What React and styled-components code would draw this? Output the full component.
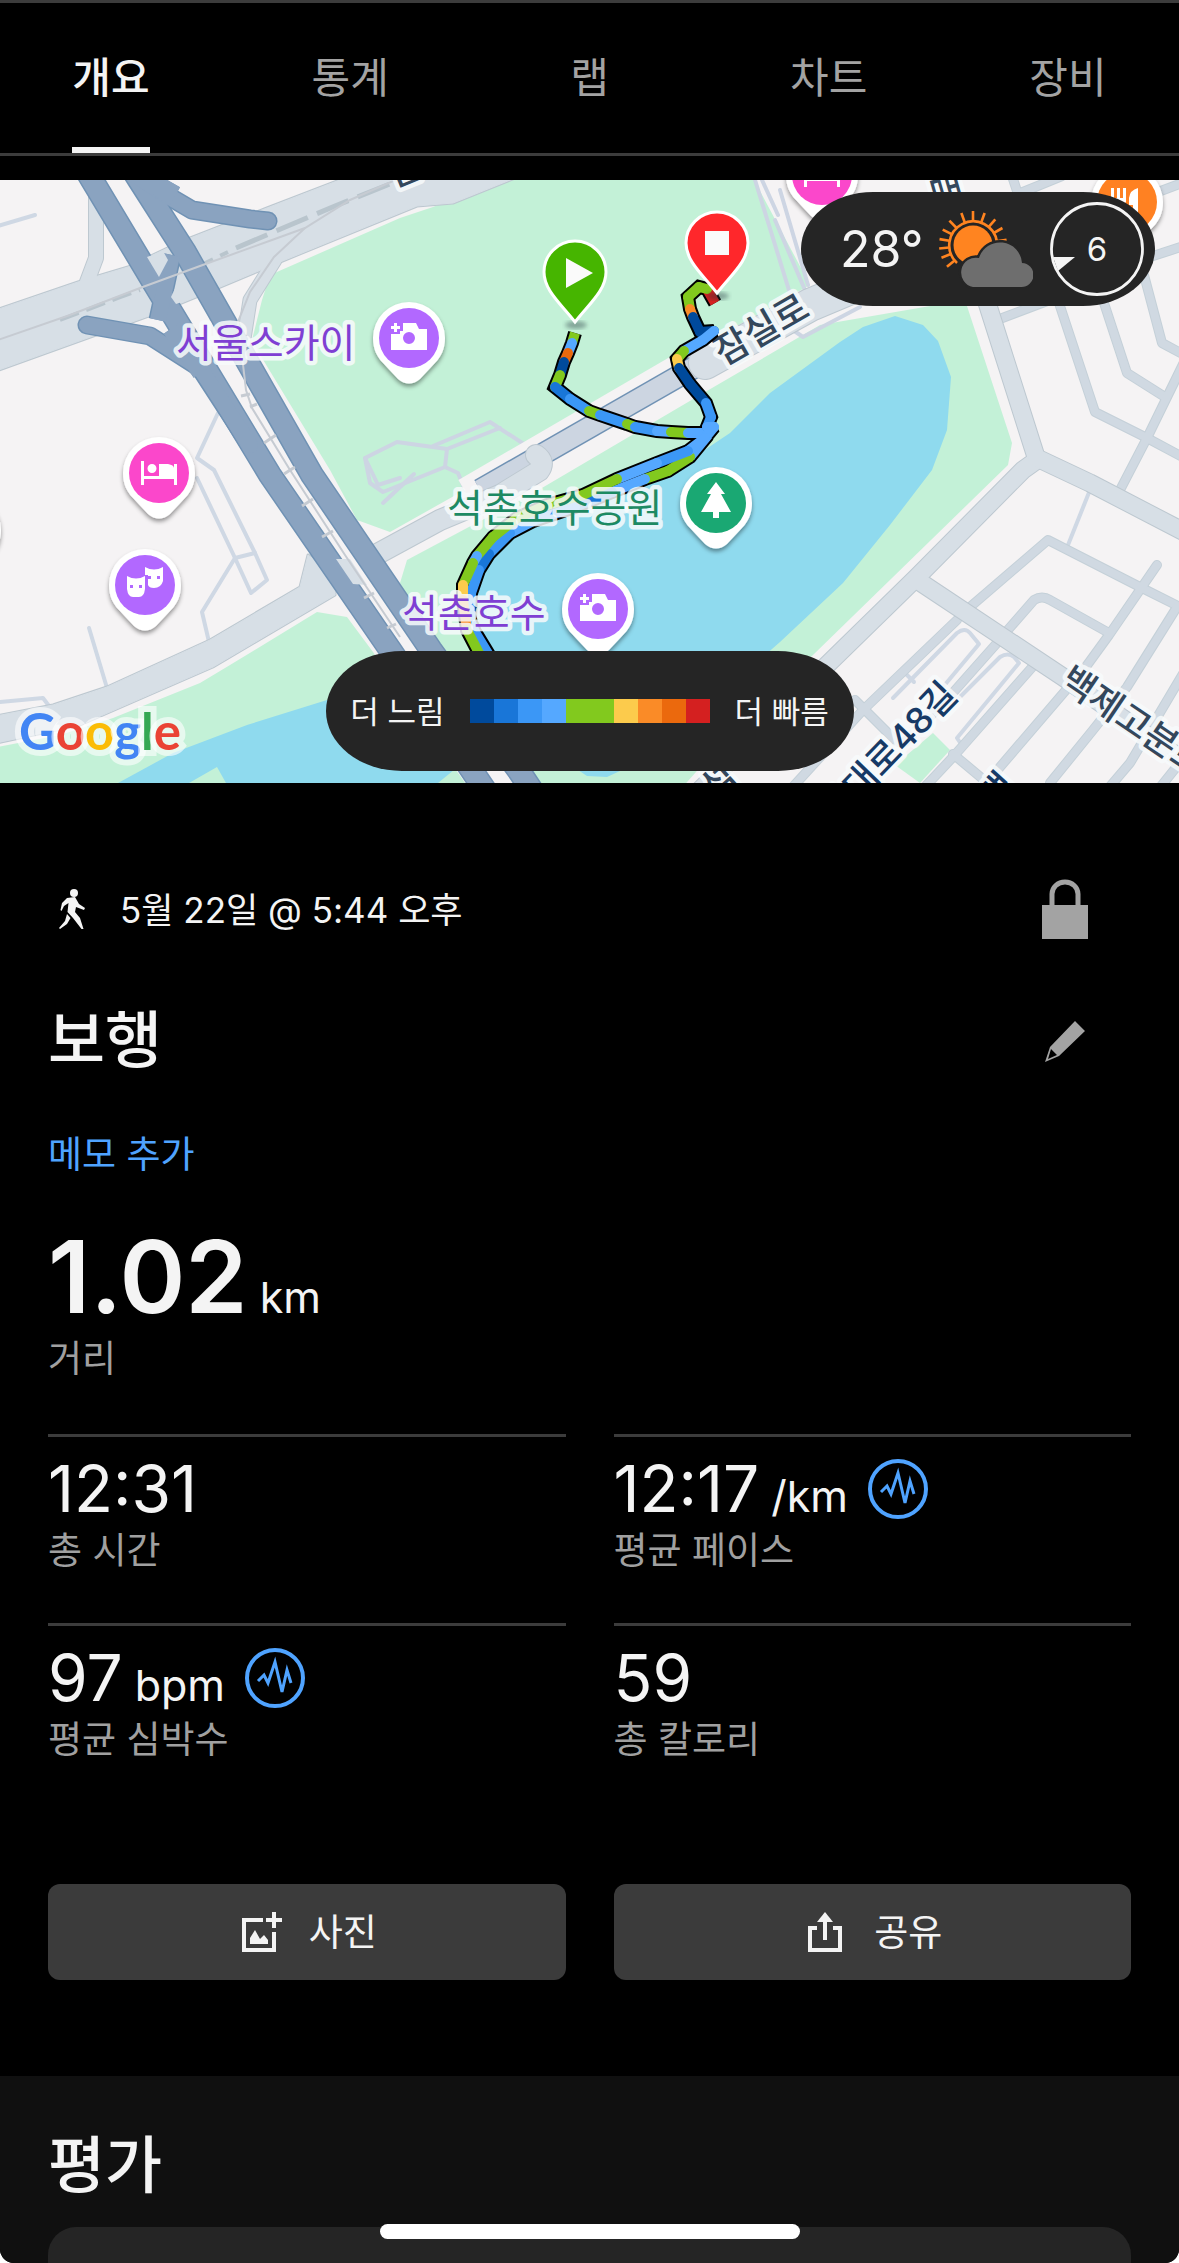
import React, { useState } from 'react';
import styled, { createGlobalStyle } from 'styled-components';

const GlobalStyle = createGlobalStyle`
  *, *::before, *::after { box-sizing: border-box; }
  body {
    margin: 0;
    background: #fff;
    font-family: Inter, 'Noto Sans CJK KR', sans-serif;
  }
  button { font: inherit; color: inherit; border: 0; background: none; padding: 0; cursor: pointer; }
  h1, h2, p, dl, dt, dd { margin: 0; font-weight: inherit; font-size: inherit; }
`;

const Page = styled.main`
  display: flex;
  flex-direction: column;
  min-height: 100vh;
  background: #000;
  color: #f4f4f4;
  border-radius: 0 0 14px 14px;
  overflow: hidden;
`;

/* ---------- Tabs ---------- */

const TabBar = styled.nav`
  display: flex;
  justify-content: space-between;
  height: 156px;
  padding: 0 72px;
  border-top: 3px solid #3c3c3c;
  border-bottom: 3px solid #3c3c3c;
`;

const Tab = styled.button`
  min-width: 78px;
  padding-bottom: 8px;
  font-size: 42px;
  font-weight: ${(p) => (p.$active ? 500 : 400)};
  color: ${(p) => (p.$active ? '#f4f4f4' : '#a3a3a3')};
  border-top: 6px solid transparent;
  border-bottom: 6px solid ${(p) => (p.$active ? '#f4f4f4' : 'transparent')};
`;

/* ---------- Map ---------- */

const MapPanel = styled.section`
  position: relative;
  height: 603px;
  margin-top: 24px;
  overflow: hidden;
  background: #f5f3f4;
`;

const MapCanvas = styled.svg`
  display: block;
  width: 100%;
  height: 100%;
`;

const MapText = styled.text`
  font-family: Inter, 'Noto Sans CJK KR', sans-serif;
  font-size: ${(p) => p.$size || 39}px;
  font-weight: ${(p) => p.$weight || 400};
  fill: ${(p) => p.$color};
  stroke: rgba(248, 251, 252, 0.85);
  stroke-width: 9px;
  stroke-linejoin: round;
  paint-order: stroke;
  dominant-baseline: central;
`;

const Attribution = styled.div`
  position: absolute;
  left: 19px;
  bottom: 20px;
  font-family: Lato, sans-serif;
  font-size: 51px;
  font-weight: 700;
  line-height: 64px;
  -webkit-text-stroke: 12px rgba(255, 255, 255, 0.6);
  paint-order: stroke;
`;

const LogoLetter = styled.span`
  color: ${(p) => p.$color};
`;

const WeatherPill = styled.div`
  position: absolute;
  top: 12px;
  right: 24px;
  display: flex;
  align-items: center;
  width: 354px;
  height: 114px;
  padding: 0 10px 0 39px;
  border-radius: 72px / 57px;
  background: #252525;
`;

const Temperature = styled.span`
  flex: 1;
  font-size: 50px;
  font-weight: 400;
`;

const Wind = styled.div`
  display: grid;
  place-items: center;
  margin-left: 16px;
  font-size: 33px;
  line-height: 96px;

  > * { grid-area: 1 / 1; }
`;

const Legend = styled.div`
  position: absolute;
  left: 50%;
  bottom: 12px;
  transform: translateX(-50%);
  display: flex;
  align-items: center;
  justify-content: center;
  gap: 25px;
  width: 528px;
  height: 120px;
  border-radius: 76px / 60px;
  background: #252525;
  font-size: 31px;
  white-space: nowrap;
`;

const Caption = styled.span`
  padding-bottom: 4px;
`;

const Scale = styled.div`
  display: flex;
`;

const Swatch = styled.span`
  width: 24px;
  height: 24px;
  background: ${(p) => p.$color};
`;

/* ---------- Summary ---------- */

const Summary = styled.section`
  padding: 84px 48px 96px;
`;

const Row = styled.div`
  display: flex;
  align-items: center;
  justify-content: space-between;
  height: ${(p) => p.$height}px;
  margin-bottom: 42px;
`;

const When = styled.div`
  display: flex;
  align-items: center;
  gap: 24px;
  font-size: 35px;
`;

const IconButton = styled.button`
  display: grid;
  place-items: center;
  width: 132px;
  height: 84px;
`;

const Title = styled.h1`
  font-size: 62px;
  font-weight: 500;
  line-height: 84px;
`;

const NoteLink = styled.a`
  display: block;
  width: fit-content;
  font-size: 37px;
  line-height: 48px;
  color: #4fa3ff;
  text-decoration: none;
`;

const Metric = styled.div`
  display: flex;
  flex-direction: column-reverse;
`;

const Distance = styled(Metric)`
  margin: 48px 0 51px;
`;

const Label = styled.dt`
  padding-top: 2px;
  font-size: 37px;
  line-height: 48px;
  color: #a0a0a0;
`;

const BigValue = styled.dd`
  margin-bottom: 6px;
  font-size: 100px;
  font-weight: 600;
  line-height: 100px;
`;

const Unit = styled.span`
  margin-left: 12px;
  font-size: 43px;
  font-weight: 400;
  line-height: 1;
`;

const Stats = styled.dl`
  display: grid;
  grid-template-columns: 1fr 1fr;
  gap: 48px;
`;

const Stat = styled(Metric)`
  padding-top: 16px;
  border-top: 3px solid #3c3c3c;
`;

const Value = styled.dd`
  display: flex;
  align-items: center;
  gap: 20px;
  height: 72px;
  font-size: 64px;
  line-height: 72px;
`;

const Actions = styled.div`
  display: grid;
  grid-template-columns: 1fr 1fr;
  gap: 48px;
  margin-top: 120px;
`;

const ActionButton = styled.button`
  display: flex;
  align-items: center;
  justify-content: center;
  gap: 24px;
  height: 96px;
  border-radius: 12px;
  background: #3b3b3b;
  font-size: 37px;
`;

/* ---------- Rating ---------- */

const Rating = styled.section`
  flex: 1;
  display: flex;
  flex-direction: column;
  padding: 48px 48px 0;
  background: #101010;
`;

const RatingTitle = styled(Title)`
  margin-bottom: 19px;
`;

const RatingCard = styled.div`
  flex: 1;
  min-height: 36px;
  border-radius: 28px 28px 0 0;
  background: #252525;
`;

const HomeIndicator = styled.div`
  position: fixed;
  left: 50%;
  bottom: 24px;
  transform: translateX(-50%);
  width: 420px;
  height: 15px;
  border-radius: 8px;
  background: #fff;
`;

/* ---------- Map data ---------- */

const C = {
  navy: '#004a9c', blue: '#1976d8', mid: '#3b97f6', sky: '#55a8ff',
  green: '#82c91e', yellow: '#fccb4c', amber: '#fa8b27', orange: '#eb690d', red: '#d42020',
};

const LEGEND = [C.navy, C.blue, C.mid, C.sky, C.green, C.green, C.yellow, C.amber, C.orange, C.red];

const MINOR_ROADS = [
  'M1058 300L1095 412L1147 438L1190 461',
  'M1103 300L1127 373L1165 397',
  'M1144 275L1162 343L1190 358',
  'M1190 350L1147 438L1120 490',
  'M997 320L1050 300',
  'M1012 176L1018 194L1062 176',
  'M1150 257L1190 244',
  'M1158 192L1190 180',
  'M970 607L1048 540L1140 587L1190 612',
  'M1006 632L1034 600Q1042 595 1050 600L1109 633',
  'M1157 565L1109 635L1085 668',
  'M1066 690L1000 767L984 790',
  'M1177 607L1127 687L1093 730L1050 783',
  'M1190 662L1130 763L1107 790',
  'M1190 750L1158 790',
  'M957 620L863 710L790 790',
  'M997 643L950 696L905 742',
  'M1035 664L953 757L922 790',
  'M953 754L990 785',
  'M855 700L897 742',
];

const SERVICE_ROADS = [
  'M-2 226L35 215',
  'M218 413L197 458L214 470L255 553L267 580L251 593L235 558L197 478',
  'M235 558L202 612L209 642',
  'M235 558L255 553',
  'M89 628L107 688',
  'M0 702L43 698L52 710',
  'M1090 490L1068 545',
  'M893 698L957 633Q965 627 970 633L979 644L943 687',
  'M960 697L1000 657Q1008 652 1014 657L1019 663L957 738L961 744',
  'M907 675L914 682',
];

const PARK_PATHS = [
  'M433 446L490 422L533 450',
  'M500 428L447 449L397 442L365 458L370 483L383 492L445 467L458 473L465 490',
  'M447 449L445 467',
  'M383 503L414 474',
  'M365 458L378 485L400 478',
  'M755 180L772 235L792 300',
  'M762 180L778 215',
  'M775 220L805 290',
  'M860 307L803 337L790 328',
  'M780 190L808 285',
];

/* Each leg of the walk: points with the speed colour of the stretch that follows. */
const ROUTE = [
  {
    points: [[575, 333], [572, 343], [568, 353], [564, 362], [560, 375], [555, 387], [570, 399], [589, 411], [600, 415], [627, 424], [635, 427], [657, 431], [671, 432], [688, 433], [702, 433]],
    colors: [C.green, C.sky, C.orange, C.navy, C.green, C.blue, C.mid, C.green, C.mid, C.green, C.mid, C.sky, C.green, C.sky],
  },
  {
    points: [[715, 303], [707, 289], [699, 287], [688, 297], [690, 309], [693, 317], [700, 332], [714, 331], [703, 340], [684, 351], [677, 359], [679, 368], [690, 384], [706, 403], [711, 417], [707, 427], [714, 427], [705, 438], [688, 451], [657, 463], [617, 479], [583, 495], [547, 505], [517, 518], [493, 537], [477, 556], [473, 563], [463, 585], [463, 600], [467, 630], [480, 655]],
    colors: [C.red, C.green, C.green, C.green, C.amber, C.navy, C.navy, C.sky, C.sky, C.green, C.yellow, C.navy, C.navy, C.mid, C.mid, C.sky, C.sky, C.sky, C.mid, C.sky, C.green, C.green, C.green, C.green, C.green, C.sky, C.green, C.yellow, C.amber, C.green],
  },
];

const RETURN_LEG = {
  points: [[708, 435], [690, 457], [668, 471], [645, 479], [612, 492], [575, 507], [533, 521], [510, 533], [489, 554], [479, 570], [471, 593], [470, 620], [475, 632], [489, 655]],
  colors: [C.sky, C.green, C.green, C.sky, C.blue, C.mid, C.sky, C.mid, C.blue, C.mid, C.mid, C.mid, C.mid],
};

const toPath = (pts) => 'M' + pts.map((p) => p.join(' ')).join('L');

function Leg({ points, colors }) {
  return points.slice(1).map((p, i) => (
    <path key={i} d={toPath([points[i], p])} stroke={colors[i]} strokeWidth="10" strokeLinecap={i ? 'round' : 'butt'} />
  ));
}

/* ---------- Map drawings ---------- */

function PlacePin({ x, y, color, children }) {
  return (
    <g transform={`translate(${x} ${y})`}>
      <path
        d="M-36 0A36 36 0 1 1 36 0C36 11 32 19 26 25L11 41Q0 50-11 41L-26 25C-32 19-36 11-36 0Z"
        fill="#fff"
        filter="url(#pinShadow)"
      />
      <circle r="30" fill={color} />
      {children}
    </g>
  );
}

const CameraGlyph = () => (
  <path
    fill="#fff"
    fillRule="evenodd"
    d="M-18-4H-9V-7H-6V-15H7L10-9H18V12H-18ZM0-6A6 6 0 1 0 0 6A6 6 0 1 0 0-6ZM-15-15H-12V-12H-9V-9H-12V-6H-15V-9H-18V-12H-15Z"
  />
);

const BedGlyph = () => (
  <path fill="#fff" d="M-18-12H-15V3H0V-9H9Q15-8 15-5V-9H18V12H15V6H-15V12H-18ZM-7-9A4 4 0 1 1-7 0A4 4 0 1 1-7-9Z" />
);

const MasksGlyph = () => (
  <g fill="#fff">
    <path fillRule="evenodd" d="M0-18Q9-13 18-18V-4Q16 3 9 3Q4 3 3 0V-10H0ZM3-9V-6H6V-9ZM12-9V-6H15V-9Z" />
    <path fillRule="evenodd" d="M-18-9Q-9-4 0-9V4Q-1 12-6 12H-12Q-17 12-18 4ZM-15 0V3H-12V0ZM-6 0V3H-3V0Z" />
  </g>
);

const TreeGlyph = () => <path fill="#fff" d="M0-21L9-9H5L15 9H3V15H-3V9H-15L-5-9H-9Z" />;

const ForkGlyph = () => (
  <path fill="#fff" d="M-16-14H-13V-4H-10V-14H-7V-4H-4V-14H-1V0L-6 5V15H-11V5L-16 0ZM11-14V15H6V3H2V-4Q3-12 11-14Z" />
);

function RoutePin({ x, y, color, children }) {
  return (
    <g transform={`translate(${x} ${y})`}>
      <ellipse cx="1" cy="53" rx="11" ry="4" fill="#20303a" opacity="0.4" filter="url(#soft)" />
      <path
        d="M-31 0A31 31 0 0 1 31 0C31 18 15 31 0 50C-15 31-31 18-31 0Z"
        fill={color}
        stroke="#fff"
        strokeWidth="3"
      />
      {children}
    </g>
  );
}

function MapDrawing() {
  return (
    <MapCanvas viewBox="0 180 1179 603" preserveAspectRatio="xMidYMid slice" fill="none" aria-label="활동 지도">
      <defs>
        <filter id="pinShadow" x="-30%" y="-30%" width="160%" height="160%">
          <feDropShadow dx="0" dy="3" stdDeviation="2" floodColor="#000" floodOpacity="0.4" />
        </filter>
        <filter id="soft"><feGaussianBlur stdDeviation="2" /></filter>
      </defs>

      {/* parks */}
      <g fill="#c3f1d7">
        <path d="M270 275L400 218L433 207L510 176H752L810 285L680 358L545 440L470 487L390 532L357 520L330 470L262 358L252 340L262 300Z" />
        <path d="M407 560L467 528L530 495L700 395L820 325L965 300L1012 443L1008 465L813 655L720 745L680 790H542L420 620L400 583Z" />
        <path d="M317 612L347 617L373 652L470 790H-2V747L60 735L113 718L200 683L230 665Z" />
        <path d="M933 733L950 750L920 783L895 765Z" />
      </g>

      {/* water */}
      <g fill="#8fdaee">
        <path d="M895 316L923 325L938 341L951 377L947 430L932 470L890 525L843 583L780 642L700 712L620 771L607 777L587 776L575 768L520 700L480 630L475 590L490 553L530 528L593 503L673 470L700 453L730 433L770 393L840 342L863 327Z" />
        <path d="M327 700L247 725L173 753L118 783H189L217 767L226 783H438L460 765L400 700Z" />
      </g>

      {/* small roads */}
      <g stroke="#cfd8e4" strokeWidth="4" strokeLinejoin="round" strokeLinecap="round">
        {SERVICE_ROADS.map((d) => <path key={d} d={d} />)}
      </g>
      <g stroke="#cdd5e3" strokeWidth="4" strokeLinejoin="round" strokeLinecap="round">
        {PARK_PATHS.map((d) => <path key={d} d={d} />)}
      </g>
      <g stroke="#c4d0d8" strokeWidth="10" strokeLinejoin="round" strokeLinecap="round">
        {MINOR_ROADS.map((d) => <path key={d} d={d} />)}
      </g>
      <g stroke="#d0d9e2" strokeWidth="8" strokeLinejoin="round" strokeLinecap="round">
        {MINOR_ROADS.map((d) => <path key={d} d={d} />)}
      </g>

      {/* underpass beside the park */}
      <path d="M470 500L690 372" stroke="#f5f3f4" strokeWidth="46" />
      <path d="M480 490L700 364" stroke="#7092b4" strokeWidth="23" />
      <path d="M480 490L700 364" stroke="#ccd5e1" strokeWidth="20" />

      {/* main roads */}
      <g strokeLinejoin="round" strokeLinecap="round">
        {[['#bdc8d0', 2], ['#d7dfe6', 0]].map(([color, edge]) => (
          <g key={color} stroke={color}>
            <path d="M983 290L1037 460L1023 470L917 577L830 662L700 790" strokeWidth={17 + edge} />
            <path d="M1037 458L1090 483L1190 535" strokeWidth={17 + edge} />
            <path d="M917 580L1063 677L1190 765" strokeWidth={17 + edge} />
            <path d="M96 190V258L84 290" strokeWidth={14 + edge} />
            <path d="M275 260L250 300L243 345" strokeWidth={13 + edge} />
            <path d="M536 455Q546 462 539 471L500 495L440 520L370 558" strokeWidth={20 + edge} />
            <path d="M705 363L810 305L860 284" strokeWidth={32 + edge} />
            <path
              d="M-4 310L78 282L128 267L180 242L267 208L350 176H520L453 203L417 206L280 262L213 290L157 313L-4 371Z"
              fill="#d7dfe6"
              strokeWidth={1 + edge}
            />
            <path
              d="M-4 716L53 705L107 687L210 640L300 587L308 555L335 575V595L213 667L80 725L-4 743Z"
              fill="#d7dfe6"
              strokeWidth={1 + edge}
            />
          </g>
        ))}
      </g>
      <path d="M236 248L335 206L400 180" stroke="#b9c5cd" strokeWidth="5" strokeDasharray="34 10" />
      <path d="M60 320L118 298L140 290M195 268L228 252" stroke="#b9c5cd" strokeWidth="4" strokeDasharray="20 8" />

      {/* expressway */}
      <g strokeLinejoin="round">
        {[['#7092b4', 3], ['#8aa3c0', 0]].map(([color, edge]) => (
          <g key={color} stroke={color}>
            <path d="M74 150L92 180L152 280L270 475L391 651L485 790" strokeWidth={21 + edge} />
            <path d="M120 150L139 180L185 252L312 475L431 650L519 771L535 795" strokeWidth={21 + edge} />
            <path d="M172 255L158 320" strokeWidth={16 + edge} />
            <path d="M140 178L158 190L192 210L250 219L268 221" strokeWidth={16 + edge} strokeLinecap="round" />
            <path d="M130 170L175 196" strokeWidth={20} />
            <path d="M87 325L150 336L200 368L250 445" strokeWidth={16 + edge} strokeLinecap="round" />
            <path d="M172 328L202 372" strokeWidth={20} />
          </g>
        ))}
      </g>
      <path d="M147 257L163 251L168 260L159 277Z" fill="#d7dfe6" />
      <path d="M180 278L191 299L176 304L171 297Z" fill="#d7dfe6" />
      <path d="M336 559H350L367 585L353 584Z" fill="#d7dfe6" />
      <g stroke="#c6cbd2" strokeWidth="2">
        <path d="M-2 340L70 315L140 288L200 266L272 240L305 228L350 200L400 178" />
        <path d="M305 228L274 257L250 292L238 322L246 390L252 408L290 470L345 555L400 637" />
        <path d="M241 396L250 394M250 407L257 404M264 443L276 435M284 474L295 467M302 506L313 499M322 537L333 531M364 598L374 593M387 628L396 624" strokeWidth="3" />
      </g>

      {/* labels under the route */}
      <MapText x="388" y="176" $size={36} $weight={500} $color="#33475c" transform="rotate(-22 388 176)">림</MapText>
      <MapText x="947" y="188" $size={36} $weight={500} $color="#33475c" textAnchor="middle" transform="rotate(-106 947 188)">로</MapText>
      <MapText x="761" y="329" $size={37} $weight={500} $color="#33475c" textAnchor="middle" transform="rotate(-30 761 329)">잠실로</MapText>

      {/* walked route */}
      <g strokeLinejoin="miter" strokeMiterlimit="2">
        {[...ROUTE, RETURN_LEG].map((leg, i) => (
          <path key={i} d={toPath(leg.points)} stroke="#000" strokeWidth="14" />
        ))}
        <Leg {...ROUTE[0]} />
        <Leg {...RETURN_LEG} />
        <Leg {...ROUTE[1]} />
      </g>

      {/* labels */}
      <MapText x="176" y="342" $color="#7f3fd3">서울스카이</MapText>
      <MapText x="447" y="507" $color="#1d8a63">석촌호수공원</MapText>
      <MapText x="402" y="612" $color="#7f3fd3">석촌호수</MapText>
      <MapText x="950" y="688" $size={36} $weight={500} $color="#163a66" textAnchor="end" transform="rotate(-46 950 688)">송파대로48길</MapText>
      <MapText x="1065" y="675" $size={36} $weight={500} $color="#33475c" transform="rotate(34 1065 675)">백제고분로</MapText>
      <MapText x="718" y="781" $size={36} $weight={500} $color="#33475c" textAnchor="middle" transform="rotate(-42 718 781)">석</MapText>
      <MapText x="997" y="790" $size={36} $weight={500} $color="#163a66" textAnchor="middle" transform="rotate(-48 997 790)">백</MapText>

      {/* places */}
      <PlacePin x={-35} y={530} color="#b268ff" />
      <PlacePin x={159} y={473} color="#fb47cb"><BedGlyph /></PlacePin>
      <PlacePin x={145} y={585} color="#b268ff"><MasksGlyph /></PlacePin>
      <PlacePin x={409} y={338} color="#b268ff"><CameraGlyph /></PlacePin>
      <PlacePin x={598} y={609} color="#b268ff"><CameraGlyph /></PlacePin>
      <PlacePin x={716} y={503} color="#1aa873"><TreeGlyph /></PlacePin>
      <PlacePin x={822} y={175} color="#fb47cb"><BedGlyph /></PlacePin>
      <PlacePin x={1127} y={202} color="#ff8122"><ForkGlyph /></PlacePin>

      <RoutePin x={575} y={272} color="#46b500"><path d="M-9-14L18 1L-9 16Z" fill="#fafafa" /></RoutePin>
      <RoutePin x={717} y={243} color="#ff272b"><path d="M-12-12H12V12H-12Z" fill="#fafafa" /></RoutePin>
    </MapCanvas>
  );
}

/* ---------- Icons ---------- */

const SUN_RAYS = [140, 158, 174, 190, 207, 226, 250, 270, 290, 311, 330, 351];

function WeatherIcon() {
  return (
    <svg width="94" height="80" viewBox="0 0 94 80" role="img" aria-label="구름 조금">
      <g stroke="#ff8420" strokeWidth="2.6" fill="none">
        {SUN_RAYS.map((a) => {
          const r = (a * Math.PI) / 180;
          return (
            <line key={a} x1={34 + 24 * Math.cos(r)} y1={36 + 24 * Math.sin(r)} x2={34 + 34 * Math.cos(r)} y2={36 + 34 * Math.sin(r)} />
          );
        })}
        <path d="M18 54A24 24 0 1 1 58 33" />
      </g>
      <circle cx="34" cy="36" r="19.5" fill="#ff8420" />
      <path
        d="M34 78A14 14 0 1 1 40 49A22 22 0 0 1 83 54A12 12 0 0 1 82 78Z"
        fill="#6e6e6e"
        stroke="#252525"
        strokeWidth="5"
        paintOrder="stroke"
      />
    </svg>
  );
}

function WindDial() {
  return (
    <svg width="96" height="96" viewBox="0 0 96 96" fill="none" aria-hidden="true">
      <circle cx="48" cy="48" r="45.5" stroke="#f4f4f4" strokeWidth="2.8" />
      <path d="M4 56H26L9 70Z" fill="#f4f4f4" />
    </svg>
  );
}

function WalkIcon() {
  return (
    <svg width="48" height="48" viewBox="0 0 48 48" fill="#f4f4f4" aria-hidden="true">
      <circle cx="26" cy="8" r="4" />
      <path d="M19 13L27 12L31 19L37 23L36 25L28 22L27 27L32 33L35.500 44L33.500 44L25 33L19.500 27L20.500 18L16 21L13.500 26L12.500 25L14 18Z" />
      <path d="M19 29L22.500 33L19 39L12 44L11 43L17 36Z" />
    </svg>
  );
}

function LockIcon() {
  return (
    <svg width="48" height="60" viewBox="0 0 48 60" fill="none" aria-hidden="true">
      <path d="M11 28V15A13 12 0 0 1 37 15V28" stroke="#a3a3a3" strokeWidth="5" />
      <path d="M1 26H47V60H1Z" fill="#a3a3a3" />
    </svg>
  );
}

function PencilIcon() {
  return (
    <svg width="48" height="48" viewBox="0 0 48 48" aria-hidden="true">
      <path fill="#a3a3a3" fillRule="evenodd" d="M34 4L44 14L18 39L4 45L9 30ZM10 32L7 42L16 38Z" />
    </svg>
  );
}

function PulseIcon() {
  return (
    <svg width="60" height="60" viewBox="0 0 60 60" fill="none" stroke="#4fa3ff" aria-hidden="true">
      <circle cx="30" cy="30" r="28" strokeWidth="4" />
      <path d="M13 33L19 27L23 35L30 14L37 44L42 22L46 35" strokeWidth="3" />
    </svg>
  );
}

function PhotoIcon() {
  return (
    <svg width="48" height="48" viewBox="0 0 48 48" aria-hidden="true">
      <g fill="none" stroke="#f4f4f4" strokeWidth="4">
        <path d="M26 12H7V42H37V24" />
        <path d="M37 4V20M29 12H45" />
      </g>
      <path fill="#f4f4f4" d="M13 36V30L18 22L23 31L27 27L31 32V36Z" />
    </svg>
  );
}

function ShareIcon() {
  return (
    <svg width="48" height="48" viewBox="0 0 48 48" fill="none" stroke="#f4f4f4" aria-hidden="true">
      <path d="M15 20H8V42H38V20H31" strokeWidth="4" />
      <path d="M23 32V9" strokeWidth="4" />
      <path d="M23 4L31 14H15Z" fill="#f4f4f4" stroke="none" />
    </svg>
  );
}

/* ---------- App ---------- */

const TABS = ['개요', '통계', '랩', '차트', '장비'];

const STATS = [
  { value: '12:31', label: '총 시간' },
  { value: '12:17', unit: '/km', label: '평균 페이스', pulse: true },
  { value: '97', unit: 'bpm', label: '평균 심박수', pulse: true },
  { value: '59', label: '총 칼로리' },
];

const LOGO = [['G', '#4285f4'], ['o', '#ea4335'], ['o', '#fbbc05'], ['g', '#4285f4'], ['l', '#34a853'], ['e', '#ea4335']];

export default function App() {
  const [active, setActive] = useState('개요');

  return (
    <Page>
      <GlobalStyle />
      <TabBar>
        {TABS.map((t) => (
          <Tab key={t} type="button" $active={t === active} onClick={() => setActive(t)}>{t}</Tab>
        ))}
      </TabBar>

      <MapPanel>
        <MapDrawing />
        <Attribution>
          {LOGO.map(([ch, color], i) => <LogoLetter key={i} $color={color}>{ch}</LogoLetter>)}
        </Attribution>
        <WeatherPill>
          <Temperature>28°</Temperature>
          <WeatherIcon />
          <Wind>
            <WindDial />
            <span>6</span>
          </Wind>
        </WeatherPill>
        <Legend>
          <Caption>더 느림</Caption>
          <Scale>
            {LEGEND.map((color, i) => <Swatch key={i} $color={color} />)}
          </Scale>
          <Caption>더 빠름</Caption>
        </Legend>
      </MapPanel>

      <Summary>
        <Row $height={84}>
          <When>
            <WalkIcon />
            <Caption>5월 22일 @ 5:44 오후</Caption>
          </When>
          <IconButton type="button" aria-label="개인정보 설정"><LockIcon /></IconButton>
        </Row>
        <Row $height={96}>
          <Title>보행</Title>
          <IconButton type="button" aria-label="이름 편집"><PencilIcon /></IconButton>
        </Row>
        <NoteLink href="#note">메모 추가</NoteLink>

        <dl>
          <Distance>
            <Label>거리</Label>
            <BigValue>1.02<Unit>km</Unit></BigValue>
          </Distance>
        </dl>

        <Stats>
          {STATS.map((s) => (
            <Stat key={s.label}>
              <Label>{s.label}</Label>
              <Value>
                <span>{s.value}{s.unit && <Unit>{s.unit}</Unit>}</span>
                {s.pulse && <PulseIcon />}
              </Value>
            </Stat>
          ))}
        </Stats>

        <Actions>
          <ActionButton type="button"><PhotoIcon /><Caption>사진</Caption></ActionButton>
          <ActionButton type="button"><ShareIcon /><Caption>공유</Caption></ActionButton>
        </Actions>
      </Summary>

      <Rating>
        <RatingTitle as="h2">평가</RatingTitle>
        <RatingCard />
      </Rating>
      <HomeIndicator />
    </Page>
  );
}
